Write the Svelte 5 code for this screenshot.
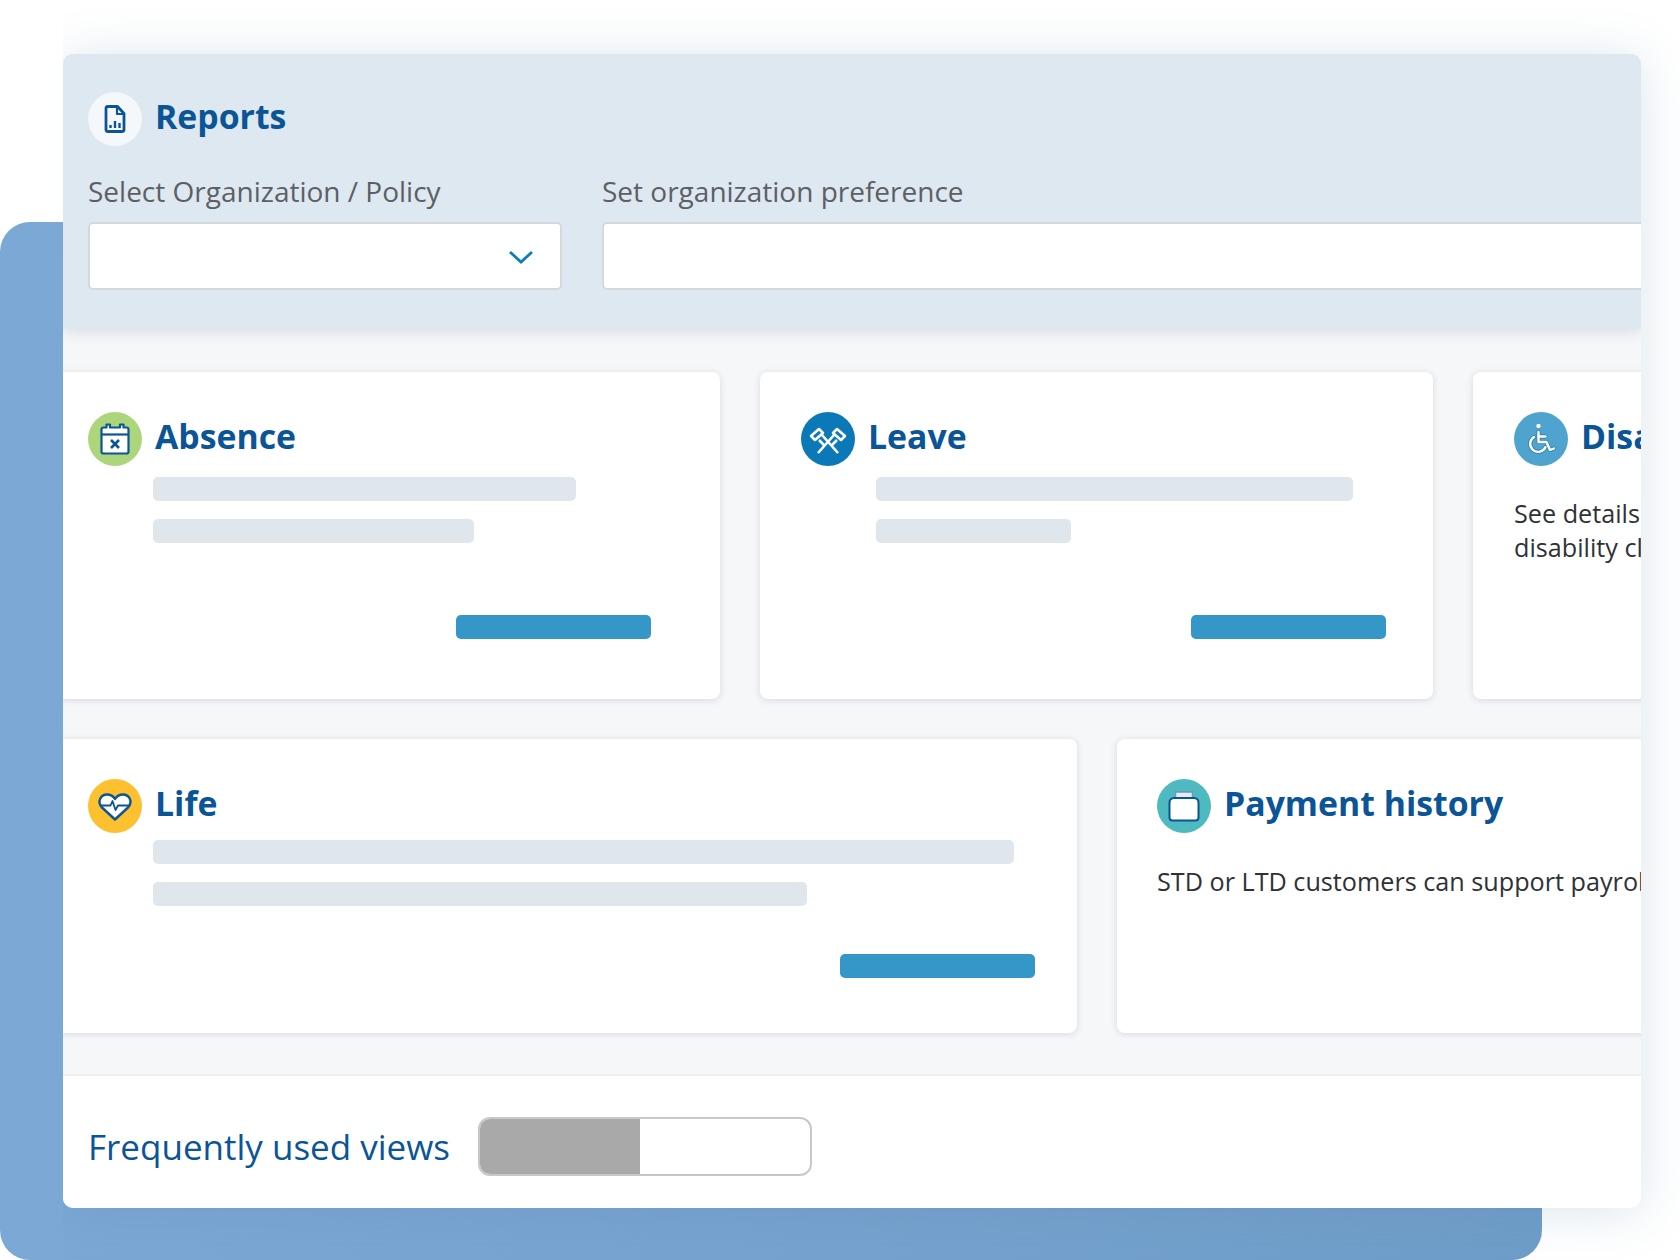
<script>
	const absenceBars = [423, 321];
	const leaveBars = [477, 195];
	const lifeBars = [861, 654];
</script>

<div class="page">
	<div class="backdrop"></div>
	<div class="window">
		<header class="top">
			<div class="heading">
				<span class="badge white">
					<svg viewBox="0 0 54 54" width="54" height="54" fill="none" stroke="#0b5596" stroke-width="2.800" stroke-linejoin="round">
						<path d="M18 16.500 a2 2 0 0 1 2-2 h9.500 l6.500 7 v16 a2 2 0 0 1-2 2 h-14 a2 2 0 0 1-2-2z" />
						<path d="M29 14.500 v7.500 h7" stroke-width="2.200" />
						<path d="M22.500 36 v-3 M27 36 v-7 M31.500 36 v-5" stroke-width="2.400" />
					</svg>
				</span>
				<h1>Reports</h1>
			</div>
			<div class="fields">
				<div class="field first">
					<span class="label">Select Organization / Policy</span>
					<div class="input">
						<svg class="chevron" viewBox="0 0 26 16" width="26" height="16" fill="none" stroke="#0f7db8" stroke-width="2.800">
							<path d="M2 3 L13 13 L24 3" />
						</svg>
					</div>
				</div>
				<div class="field second">
					<span class="label">Set organization preference</span>
					<div class="input"></div>
				</div>
			</div>
		</header>

		<main class="content">
			<div class="row row-one">
				<section class="card absence">
					<div class="heading small">
						<span class="badge green">
							<svg viewBox="0 0 54 54" width="54" height="54" fill="#fff" stroke="#0b5596" stroke-width="2.200" stroke-linejoin="round">
								<path d="M13.500 17.500 a2 2 0 0 1 2-2 h3 v-3 h3.500 v3 h10 v-3 h3.500 v3 h3 a2 2 0 0 1 2 2 v22 a2 2 0 0 1-2 2 h-23 a2 2 0 0 1-2-2z" />
								<path d="M13.500 22.500 h27" fill="none" />
								<path d="M23 28 l8 8 M31 28 l-8 8" fill="none" stroke-width="2.600" />
							</svg>
						</span>
						<h2>Absence</h2>
					</div>
					<div class="bars">
						{#each absenceBars as w}
							<div class="bar" style="width: {w}px"></div>
						{/each}
					</div>
					<div class="action"></div>
				</section>

				<section class="card leave">
					<div class="heading small">
						<span class="badge blue">
							<svg viewBox="0 0 54 54" width="54" height="54" fill="none" stroke="#fff" stroke-width="2.600" stroke-linejoin="round">
								<path d="M10 24 l8-7 l4 4 l-8 7z M37 41 l-16-18" />
								<path d="M44 24 l-8-7 l-4 4 l8 7z M17 41 l16-18" />
								<path d="M18 28 l6 6 M36 28 l-6 6" />
							</svg>
						</span>
						<h2>Leave</h2>
					</div>
					<div class="bars">
						{#each leaveBars as w}
							<div class="bar" style="width: {w}px"></div>
						{/each}
					</div>
					<div class="action"></div>
				</section>

				<section class="card disability">
					<div class="heading small">
						<span class="badge sky">
							<svg viewBox="0 0 54 54" width="54" height="54" fill="none" stroke="#2c7fb0" stroke-width="4" stroke-linecap="round" stroke-linejoin="round">
								<g>
									<circle cx="24.500" cy="14" r="2.500" fill="#2c7fb0" stroke="none" />
									<path d="M24.500 20 v10 h8 l3.500 8 l4-1.500" />
									<path d="M24.500 24.500 h7" />
									<path d="M20 25 a8 8 0 1 0 11.500 10" />
								</g>
								<g stroke="#fff" stroke-width="2.400">
									<circle cx="24.500" cy="14" r="2.300" fill="#fff" stroke="none" />
									<path d="M24.500 20 v10 h8 l3.500 8 l4-1.500" />
									<path d="M24.500 24.500 h7" />
									<path d="M20 25 a8 8 0 1 0 11.500 10" />
								</g>
							</svg>
						</span>
						<h2>Disability</h2>
					</div>
					<p>See details about your<br />disability claims here</p>
				</section>
			</div>

			<div class="row row-two">
				<section class="card life">
					<div class="heading small">
						<span class="badge yellow">
							<svg viewBox="0 0 54 54" width="54" height="54" fill="#fff" stroke="#0b5596" stroke-width="2.400" stroke-linejoin="round">
								<path d="M27 40.500 L14 28.500 C8.500 22.500 13 15.500 19 15.500 C23 15.500 25.500 17.500 27 20 C28.500 17.500 31 15.500 35 15.500 C41 15.500 45.500 22.500 40 28.500z" />
								<path d="M13 26.500 h9.500 l2-4.500 l3 9 l2.500-4.500 h11" fill="none" stroke-width="1.800" />
							</svg>
						</span>
						<h2>Life</h2>
					</div>
					<div class="bars">
						{#each lifeBars as w}
							<div class="bar" style="width: {w}px"></div>
						{/each}
					</div>
					<div class="action"></div>
				</section>

				<section class="card payment">
					<div class="heading small">
						<span class="badge teal">
							<svg viewBox="0 0 54 54" width="54" height="54" fill="#fff" stroke="#0b5596" stroke-width="2" stroke-linejoin="round">
								<path d="M18.500 13 h17 v6 h-17z" fill="#e6eef4" stroke="#6d97bb" stroke-width="1.500" />
								<path d="M17 19 h20 a4.500 4.500 0 0 1 4.500 4.500 v15 a3 3 0 0 1-3 3 h-23 a3 3 0 0 1-3-3 v-15 a4.500 4.500 0 0 1 4.500-4.500z" />
							</svg>
						</span>
						<h2>Payment history</h2>
					</div>
					<p>STD or LTD customers can support payroll deductions here</p>
				</section>
			</div>
		</main>

		<footer class="bottom">
			<span class="views">Frequently used views</span>
			<div class="toggle">
				<span class="on"></span>
			</div>
		</footer>
	</div>
</div>

<style>
	:global(body) {
		margin: 0;
		background: #fff;
	}

	.page {
		position: relative;
		width: 1680px;
		height: 1260px;
		padding: 54px 39px 0 63px;
		box-sizing: border-box;
		overflow: hidden;
		font-family: "Open Sans", "Noto Sans", sans-serif;
	}

	.backdrop {
		position: absolute;
		left: 0;
		top: 222px;
		width: 1542px;
		height: 1038px;
		border-radius: 30px;
		background: linear-gradient(90deg, #7ca8d6 0%, #6f9dc9 100%);
	}

	.window {
		position: relative;
		height: 1154px;
		display: flex;
		flex-direction: column;
		background: #f5f7f9;
		border-radius: 10px;
		overflow: hidden;
	}

	.page::after {
		content: "";
		position: absolute;
		left: 63px;
		top: 54px;
		width: 1578px;
		height: 1154px;
		border-radius: 10px;
		box-shadow: 0 4px 50px rgba(90, 135, 170, 0.22);
		pointer-events: none;
		clip-path: inset(-80px -80px -80px 0);
	}

	.top {
		position: relative;
		z-index: 1;
		height: 275px;
		box-sizing: border-box;
		padding: 38px 0 0 25px;
		background: #dee8f1;
		box-shadow: 0 2px 14px rgba(60, 70, 80, 0.16);
	}

	.heading {
		display: flex;
		align-items: center;
		gap: 13px;
		height: 54px;
	}

	.badge {
		flex: none;
		width: 54px;
		height: 54px;
		border-radius: 50%;
		display: block;
	}

	.badge svg {
		display: block;
	}

	.white { background: #f5f8fb; }
	.green { background: #add67c; }
	.blue { background: #0b78b8; }
	.sky { background: #4fa3cf; }
	.yellow { background: #fdc02f; }
	.teal { background: #4fb9c0; }

	h1, h2 {
		margin: -5px 0 0;
		font-size: 33.800px;
		font-weight: 700;
		color: #0b5596;
		line-height: 1;
		white-space: nowrap;
	}

	.fields {
		display: flex;
		margin-top: 30px;
	}

	.field.first {
		width: 474px;
		margin-right: 40px;
		flex: none;
	}

	.field.second {
		flex: 1;
		margin-right: -12px;
	}

	.label {
		display: block;
		height: 46px;
		line-height: 30px;
		font-size: 28px;
		color: #5c6065;
		white-space: nowrap;
	}

	.input {
		position: relative;
		height: 68px;
		box-sizing: border-box;
		background: #fff;
		border: 2px solid #d6d9dc;
		border-radius: 5px;
	}

	.chevron {
		position: absolute;
		right: 26px;
		top: 25px;
	}

	.content {
		flex: 1;
		min-height: 0;
		padding-top: 43px;
	}

	.row {
		display: grid;
		gap: 40px;
	}

	.row-one {
		grid-template-columns: 665px 673px 400px;
		height: 327px;
		margin-left: -8px;
	}

	.row-two {
		grid-template-columns: 1022px 800px;
		height: 294px;
		margin: 40px 0 0 -8px;
	}

	.card {
		position: relative;
		box-sizing: border-box;
		padding: 40px 41px 0;
		background: #fff;
		border-radius: 8px;
		box-shadow: 0 1px 7px rgba(60, 70, 80, 0.16);
		min-width: 0;
	}

	.absence, .life {
		padding-left: 33px;
	}

	.payment {
		padding-left: 40px;
	}

	.bars {
		display: flex;
		flex-direction: column;
		gap: 18px;
		margin: 11px 0 0 65px;
	}

	.leave .bars {
		margin-left: 75px;
	}

	.life .bars {
		margin-top: 7px;
	}

	.bar {
		height: 24px;
		border-radius: 5px;
		background: #e0e7ec;
	}

	.action {
		position: absolute;
		width: 195px;
		height: 24px;
		border-radius: 5px;
		background: #3596c8;
		bottom: 60px;
		right: 69px;
	}

	.leave .action {
		right: 47px;
	}

	.life .action {
		right: 42px;
		bottom: 55px;
	}

	.card p {
		margin: 0;
		font-size: 25.200px;
		line-height: 34px;
		color: #2e3236;
		white-space: nowrap;
	}

	.disability p {
		margin-top: 30px;
	}

	.payment p {
		margin-top: 31px;
	}

	.bottom {
		height: 134px;
		box-sizing: border-box;
		display: flex;
		align-items: center;
		gap: 28px;
		padding: 8px 0 0 25px;
		background: #fff;
		border-top: 2px solid #eceef0;
	}

	.views {
		font-size: 35px;
		font-weight: 500;
		color: #0b5596;
		white-space: nowrap;
	}

	.toggle {
		width: 334px;
		height: 59px;
		box-sizing: border-box;
		border: 2px solid #c8c8c8;
		border-radius: 12px;
		background: #fff;
		overflow: hidden;
	}

	.on {
		display: block;
		width: 160px;
		height: 100%;
		background: #a9a9a9;
	}
</style>
